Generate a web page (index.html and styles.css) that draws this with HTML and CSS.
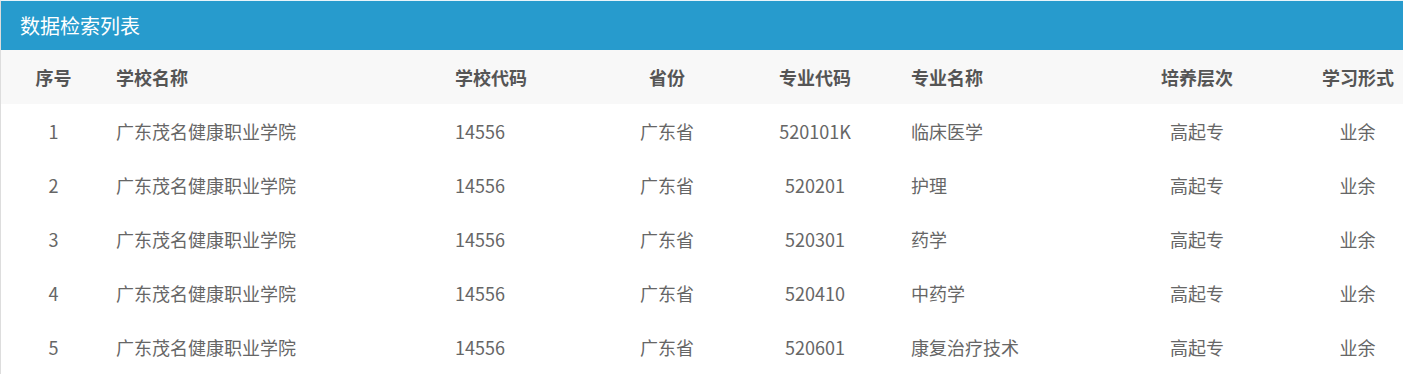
FILE: index.html
```html
<!DOCTYPE html>
<html lang="zh-CN">
<head>
<meta charset="utf-8">
<title>数据检索列表</title>
<link rel="stylesheet" href="styles.css">
</head>
<body>
<div class="panel">
  <div class="panel-heading">数据检索列表</div>
  <table class="data-table">
    <colgroup>
      <col class="c1"><col class="c2"><col class="c3"><col class="c4"><col class="c5"><col class="c6"><col class="c7"><col class="c8">
    </colgroup>
    <thead>
      <tr>
        <th class="center">序号</th>
        <th>学校名称</th>
        <th>学校代码</th>
        <th class="center">省份</th>
        <th class="center">专业代码</th>
        <th>专业名称</th>
        <th class="center">培养层次</th>
        <th class="center">学习形式</th>
      </tr>
    </thead>
    <tbody>
      <tr><td class="center">1</td><td>广东茂名健康职业学院</td><td>14556</td><td class="center">广东省</td><td class="center">520101K</td><td>临床医学</td><td class="center">高起专</td><td class="center">业余</td></tr>
      <tr><td class="center">2</td><td>广东茂名健康职业学院</td><td>14556</td><td class="center">广东省</td><td class="center">520201</td><td>护理</td><td class="center">高起专</td><td class="center">业余</td></tr>
      <tr><td class="center">3</td><td>广东茂名健康职业学院</td><td>14556</td><td class="center">广东省</td><td class="center">520301</td><td>药学</td><td class="center">高起专</td><td class="center">业余</td></tr>
      <tr><td class="center">4</td><td>广东茂名健康职业学院</td><td>14556</td><td class="center">广东省</td><td class="center">520410</td><td>中药学</td><td class="center">高起专</td><td class="center">业余</td></tr>
      <tr><td class="center">5</td><td>广东茂名健康职业学院</td><td>14556</td><td class="center">广东省</td><td class="center">520601</td><td>康复治疗技术</td><td class="center">高起专</td><td class="center">业余</td></tr>
    </tbody>
  </table>
</div>
</body>
</html>
```

FILE: styles.css
```css
html, body {
  margin: 0;
  padding: 0;
  background: #ffffff;
}
body {
  font-family: "Noto Sans CJK SC", "Liberation Sans", sans-serif;
  width: 1403px;
  overflow: hidden;
}
.panel {
  border-top: 1px solid #e8f4fa;
  border-left: 1px solid #dddddd;
  box-sizing: border-box;
  width: 1403px;
}
.panel-heading {
  background: #279bcd;
  color: #ffffff;
  height: 49px;
  line-height: 49px;
  padding-left: 19px;
  font-size: 20px;
}
.data-table {
  width: 1402px;
  border-collapse: collapse;
  table-layout: fixed;
}
.c1 { width: 105px; }
.c2 { width: 339px; }
.c3 { width: 160px; }
.c4 { width: 124px; }
.c5 { width: 172px; }
.c6 { width: 181px; }
.c7 { width: 230px; }
.c8 { width: 91px; }
.data-table th {
  background: #f8f8f8;
  color: #555555;
  font-weight: bold;
  font-size: 18px;
  height: 54px;
  padding: 0 10px;
  text-align: left;
  white-space: nowrap;
}
.data-table td {
  color: #666666;
  font-size: 18px;
  height: 54px;
  padding: 0 10px;
  text-align: left;
  white-space: nowrap;
}
.data-table .center {
  text-align: center;
}
```
